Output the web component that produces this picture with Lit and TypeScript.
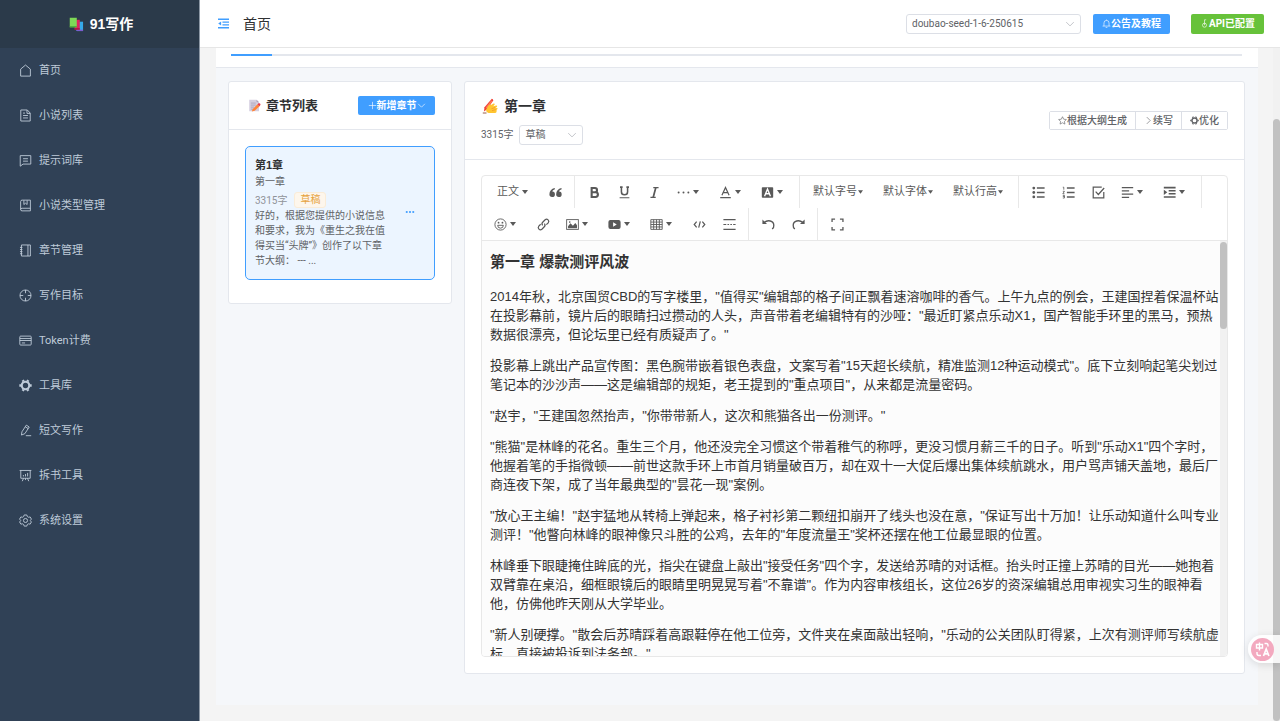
import { LitElement, html, svg, css, type TemplateResult } from "lit";
import { customElement, property } from "lit/decorators.js";

/* Line icons share a 16-unit grid and inherit the text colour. */
const ICONS: Record<string, TemplateResult> = {
  house: svg`<path d="M2 6.3 8 1.3l6 5V14.9H2z"/>`,
  document: svg`<path d="M2.2 1.2h8L13.8 5v9.8H2.2z M9.8 1.4v4h4 M5 8h6 M5 11h6 M5 5h2.4"/>`,
  chat: svg`<path d="M1.5 2h13v10.4H5L1.5 15z M5 5.8h6 M5 8.8h6"/>`,
  collection: svg`<path d="M2 3.2Q2 1.4 3.8 1.4H14v13.2H3.8Q2 14.6 2 13z M2 13Q2 11.4 3.8 11.4H14 M6 1.6v5.2l2-1.6 2 1.6V1.6"/>`,
  notebook: svg`<path d="M3 1.2h11v13.6H3z M11 1.2v13.6 M1.2 4.2h3 M1.2 6.8h3 M1.2 9.4h3 M1.2 12h3"/>`,
  aim: svg`<circle cx="8" cy="8" r="6.8"/><path d="M8 1.2v4 M8 10.8v4 M1.2 8h4 M10.8 8h4"/>`,
  card: svg`<rect x="1" y="2.6" width="14" height="11" rx="1"/><path d="M1 5.6h14 M1 8h14 M3.5 11h4"/>`,
  tools: svg`<circle cx="8" cy="8" r="4.6" stroke-width="2.6"/><path stroke-width="3" d="M4.600 1.400 5.500 3 M11.400 1.400 10.500 3 M15.600 8h-2.200 M.4 8h2.200 M4.600 14.600 5.500 13 M11.400 14.600 10.500 13"/>`,
  edit: svg`<path d="M3 13.6l.6-4L9 1.4l3.6 2.3-5.4 8.2z M7.7 3.4l3.6 2.3 M8.4 14.4h6.6"/>`,
  board: svg`<path d="M.8 1.8h14.4 M2.2 1.8v9.6h11.6V1.8 M5.6 11.4 4 15 M10.4 11.4 12 15 M8 11.4v2.2 M5.4 7.4v1.8 M8 6.2v3 M10.6 4.8v4.4"/>`,
  setting: svg`<path d="M6.4 1.2h3.2l.6 1.9 1.5.9 2-.4 1.6 2.7L14 7.8v.6l1.3 1.4-1.6 2.7-2-.4-1.5.9-.6 1.9H6.4L5.8 13l-1.5-.9-2 .4L.7 9.8 2 8.4v-.6L.7 6.3l1.6-2.7 2 .4 1.5-.9z"/><circle cx="8" cy="8" r="2.5"/>`,
  fold: svg`<path stroke-width="2" d="M0 1.800h16 M6.500 6h9.500 M6.500 10h9.500 M0 14.200h16"/><path d="M4.500 5v6L.3 8z" fill="currentColor" stroke="none"/>`,
  bell: svg`<path d="M3.500 12.500V7a4.500 4.500 0 0 1 9 0v5.500 M1 12.600h14 M8 1v1.600 M6.500 15h3"/>`,
  key: svg`<circle cx="8" cy="11" r="3.6"/><path d="M8 11V1.4h3"/>`,
  plus: svg`<path d="M8 1.5v13 M1.5 8h13"/>`,
  down: svg`<path d="M2 5l6 6 6-6"/>`,
  right: svg`<path d="M5 2l6 6-6 6"/>`,
  star: svg`<path d="M8 1.3l2.1 4.4 4.8.6-3.5 3.3.9 4.8L8 12l-4.3 2.4.9-4.8L1.1 6.3l4.800-.6z"/>`,
  more: svg`<g fill="currentColor" stroke="none"><circle cx="2.8" cy="8" r="1.7"/><circle cx="8" cy="8" r="1.7"/><circle cx="13.2" cy="8" r="1.7"/></g>`,
  dots: svg`<g fill="currentColor" stroke="none"><circle cx="2" cy="8" r="1.200"/><circle cx="8" cy="8" r="1.200"/><circle cx="14" cy="8" r="1.200"/></g>`,
  quote: svg`<path fill="currentColor" stroke="none" d="M7 2.500C3 3.500.5 6 .5 10.200a3.400 3.400 0 1 0 3.600-3.400C4.300 5.500 5.300 4.500 7.300 3.900z M15.300 2.500C11.300 3.500 8.800 6 8.800 10.200a3.400 3.400 0 1 0 3.600-3.400C12.600 5.500 13.600 4.500 15.600 3.900z"/>`,
  bold: svg`<path stroke-width="2.6" d="M4.500 2.500h4a2.600 2.600 0 0 1 0 5.200h-4z M4.500 7.700h4.800a2.900 2.900 0 0 1 0 5.800H4.500z"/>`,
  underline: svg`<path stroke-width="1.900" d="M4.200 1.400v5.600a3.800 3.800 0 0 0 7.600 0V1.400 M2.500 1.400h3.200 M10.300 1.400h3.200"/><path stroke-width="1.400" d="M2 14.400h12"/>`,
  italic: svg`<path stroke-width="2.200" d="M9.600 2 6.400 14"/><path stroke-width="1.500" d="M6.500 2h6.500 M3 14h6.500"/>`,
  color: svg`<path stroke-width="1.500" d="M3.600 11.500 8 1.800l4.400 9.700 M5.200 8.200h5.600"/><path stroke-width="1.800" d="M1.500 14.300h13"/>`,
  fill: svg`<rect x="1" y="1.500" width="14" height="13" rx="1" fill="currentColor" stroke="none"/><path stroke="#fff" stroke-width="1.700" d="M4.400 12.500 8 3.800l3.600 8.700 M5.800 9.500h4.400"/>`,
  ul: svg`<g fill="currentColor" stroke="none"><circle cx="2.200" cy="2.500" r="1.700"/><circle cx="2.200" cy="8" r="1.700"/><circle cx="2.200" cy="13.500" r="1.700"/></g><path stroke-width="1.700" d="M6 2.500h9.500 M6 8h9.500 M6 13.500h9.500"/>`,
  ol: svg`<path stroke-width="1" d="M1 1.500h1.200v3 M1 6.500h2L1 9.500h2 M1 11.500h2v3.300H1 M1 13h2"/><path stroke-width="1.700" d="M6 2.500h9.500 M6 8h9.500 M6 13.500h9.500"/>`,
  todo: svg`<path stroke-width="1.500" d="M14.500 7.500v7h-13v-13H12 M4.500 7l3.300 3.500L15 2.500"/>`,
  align: svg`<path stroke-width="1.600" d="M1 2h14 M1 6h9 M1 10h14 M1 14h9"/>`,
  indent: svg`<path stroke-width="1.900" d="M1 2h14.500 M7 5.800h8.500 M7 9.600h8.500 M1 13.600h14.500"/><path fill="currentColor" stroke="none" d="M1 4.500v6.500L5.300 7.800z"/>`,
  emoji: svg`<circle cx="8" cy="8" r="6.900"/><path d="M4.500 9a3.500 3.500 0 0 0 7 0z"/><g fill="currentColor" stroke="none"><circle cx="5.600" cy="5.700" r="1.100"/><circle cx="10.400" cy="5.700" r="1.100"/></g>`,
  link: svg`<path stroke-width="1.500" d="M7 9a2.700 2.700 0 0 1 0-3.800l3-3a2.700 2.700 0 0 1 3.800 3.800L11.500 8.200 M9 7a2.700 2.700 0 0 1 0 3.800l-3 3A2.700 2.700 0 0 1 2.200 10l2.300-2.300"/>`,
  image: svg`<rect x=".8" y="2" width="14.400" height="12"/><path fill="currentColor" stroke="none" d="M2.500 12.500V10l3-3.500 3 3L11.500 6l2 3v3.500z"/><circle cx="4.600" cy="5" r="1" fill="currentColor" stroke="none"/>`,
  video: svg`<rect x=".5" y="2.500" width="15" height="11" rx="2.500" fill="currentColor" stroke="none"/><path fill="#fff" stroke="none" d="M6.300 5.300v5.400L10.800 8z"/>`,
  table: svg`<path d="M1 2h14v12H1z M1 5h14 M1 8h14 M1 11h14 M4.500 2v12 M8 2v12 M11.500 2v12"/>`,
  code: svg`<path stroke-width="1.500" d="M4.500 4.500 1.500 8l3 3.500 M11.500 4.500l3 3.500-3 3.500 M9 4.200 7 11.800"/>`,
  divider: svg`<path stroke-width="1.400" d="M.5 2h15 M.5 14h15 M.5 8h3.500 M5.500 8h2 M9 8h2 M12.500 8h3"/>`,
  undo: svg`<path stroke-width="1.700" d="M2.500 5.500C7 2 14.500 3 14.500 9a5 5 0 0 1-2 4.500"/><path fill="currentColor" stroke="none" d="M.5 1.800v5.700h5.700z"/>`,
  redo: svg`<path stroke-width="1.700" d="M13.500 5.500C9 2 1.500 3 1.500 9a5 5 0 0 0 2 4.500"/><path fill="currentColor" stroke="none" d="M15.500 1.800v5.700H9.800z"/>`,
  full: svg`<path stroke-width="1.600" d="M1.300 5V1.300h3.700 M11 1.300h3.700V5 M14.700 11v3.700H11 M5 14.700H1.300V11"/>`,
};

const PICTURES: Record<string, TemplateResult> = {
  books: svg`<path fill="#36a9e8" d="M8 5h7v10H8z"/><path fill="#7c5ccf" d="M8 13.500h7V15H8z"/><path fill="#e0245e" d="M6 3h5.500v10.500H6z"/><path fill="#a51545" d="M6 12h5.500v1.500H6z"/><path fill="#7ed957" d="M.8.800h7.500V11H.8z"/><path fill="#46a53a" d="M.8 9.800h7.500V11H.8z"/>`,
  memo: svg`<path fill="#d5cfe0" d="M1.500 1h9l3 3v11h-12z"/><path fill="#aaa1bb" d="M10.500 1v3h3z"/><path stroke="#a79fb8" d="M3.500 5h6 M3.500 7.500h6 M3.500 10h4 M3.500 12.500h3"/><path fill="#ff8438" d="m5.700 12.500 6-6 2.500 2.500-6 5.500-3.500.800z"/><path fill="#e8384f" d="m11.700 6.500 1.300-1.200q1-.5 1.800.3t.5 1.700L14 9z"/>`,
  writing: svg`<path fill="#f04438" d="M9.800.800q1.500.2 1.400 1.600L5.500 11l-3.600 2.500.6-4.200z"/><path fill="#ff7a59" d="M9.300 2.500 10.400 3.300 5 10.400 3.800 9.600z"/><path fill="#ffc531" d="M4 11.700 6.500 7.500Q8 6 9 7l2.500-1.500q1.500-.3 1.200 1l-1.500 1.800 3-.8q1.500 0 .8 1.300l-1.500 1 1.800.2q.8 1-.6 1.700L14.500 14q-.3 1-1.500 1H6.500Q4 14.500 4 11.700z"/><path stroke="#ef9224" stroke-width=".7" d="m9.500 10.700 3.500-1.200 M10 12.700l3.700-1.200"/><path stroke="#8c4b2f" stroke-width=".9" d="M.8 15h3.700"/>`,
};

const shared = css`
  :host { box-sizing: border-box; }
  *, *::before, *::after { box-sizing: border-box; }
  button, select { font-family: inherit; margin: 0; }
  button { cursor: pointer; white-space: nowrap; }
  a { color: inherit; text-decoration: none; }
`;

@customElement("ui-icon")
export class UiIcon extends LitElement {
  static styles = css`
    :host { display: inline-flex; flex: none; width: 13px; height: 13px; }
    .glyph { width: 100%; height: 100%; fill: none; stroke: currentColor; stroke-width: 1.1; overflow: visible; }
    .picture { width: 100%; height: 100%; fill: none; stroke-width: 1; }
  `;
  @property() name = "";
  render() {
    const picture = PICTURES[this.name];
    return html`<svg class=${picture ? "picture" : "glyph"} viewBox="0 0 16 16" aria-hidden="true">${picture ?? ICONS[this.name]}</svg>`;
  }
}

const MENU: [string, string][] = [
  ["house", "首页"],
  ["document", "小说列表"],
  ["chat", "提示词库"],
  ["collection", "小说类型管理"],
  ["notebook", "章节管理"],
  ["aim", "写作目标"],
  ["card", "Token计费"],
  ["tools", "工具库"],
  ["edit", "短文写作"],
  ["board", "拆书工具"],
  ["setting", "系统设置"],
];

@customElement("side-menu")
export class SideMenu extends LitElement {
  static styles = [shared, css`
    :host { display: block; background: #304156; color: #bfcbd9; border-right: 1px solid #8d98a5; }
    .brand { display: flex; align-items: center; justify-content: center; gap: 6px; height: 48px; padding-left: 3px; background: #2b3a4a; color: #fff; font: 700 14px/20px "Liberation Sans", "Noto Sans CJK SC", sans-serif; margin: 0; }
    .brand ui-icon { width: 15px; height: 15px; }
    .link { display: flex; align-items: center; gap: 7px; height: 45px; padding-left: 19px; font-size: 11px; line-height: 16px; }
  `];
  render() {
    return html`
      <h1 class="brand"><ui-icon name="books"></ui-icon>91写作</h1>
      <nav>${MENU.map(([icon, label]) => html`<a class="link" href="#"><ui-icon name=${icon}></ui-icon>${label}</a>`)}</nav>
    `;
  }
}

@customElement("top-bar")
export class TopBar extends LitElement {
  static styles = [shared, css`
    :host { display: flex; align-items: center; height: 48px; padding: 0 16px 0 18px; background: #fff; border-bottom: 1px solid #e6e6e6; }
    .fold { display: flex; padding: 0; border: 0; background: none; color: #409eff; }
    .fold ui-icon { width: 11px; height: 11px; }
    .crumb { margin-left: 14px; font-size: 14px; line-height: 20px; color: #303133; flex: 1; }
    .pick { display: grid; align-items: center; width: 175px; }
    .pick select, .pick ui-icon { grid-area: 1 / 1; }
    .pick select { appearance: none; width: 100%; height: 20px; padding: 0 24px 0 5px; border: 1px solid #dcdfe6; border-radius: 3px; background: #fff; color: #606266; font-size: 10px; line-height: 16px; }
    .pick ui-icon { justify-self: end; width: 10px; height: 10px; margin-right: 6px; color: #a8abb2; pointer-events: none; }
    .action { display: flex; align-items: center; justify-content: center; height: 20px; border: 0; border-radius: 2px; padding: 0; color: #fff; font-size: 10px; font-weight: 700; line-height: 16px; }
    .action ui-icon { width: 9px; height: 9px; }
    .notice { width: 77px; margin-left: 12px; background: #409eff; }
    .config { width: 73px; margin-left: 21px; background: #67c23a; }
  `];
  render() {
    return html`
      <button class="fold" aria-label="折叠菜单"><ui-icon name="fold"></ui-icon></button>
      <span class="crumb">首页</span>
      <label class="pick">
        <select aria-label="模型"><option>doubao-seed-1-6-250615</option></select>
        <ui-icon name="down"></ui-icon>
      </label>
      <button class="action notice"><ui-icon name="bell"></ui-icon>公告及教程</button>
      <button class="action config"><ui-icon name="key"></ui-icon>API已配置</button>
    `;
  }
}

@customElement("chapter-list")
export class ChapterList extends LitElement {
  static styles = [shared, css`
    :host { display: block; background: #fff; border: 1px solid #e4e7ed; border-radius: 3px; }
    .head { display: flex; align-items: center; gap: 5px; height: 48px; padding: 0 16px 0 19px; border-bottom: 1px solid #e4e7ed; }
    .title { flex: 1; margin: 0; font-size: 13px; line-height: 18px; color: #303133; }
    .add { display: flex; align-items: center; justify-content: center; width: 77px; height: 19px; padding: 0; border: 0; border-radius: 2px; background: #409eff; color: #fff; font-size: 10px; font-weight: 700; line-height: 16px; }
    .add ui-icon { width: 9px; height: 9px; }
    .body { padding: 16px 16px 23px; }
    .item { display: flex; align-items: center; justify-content: space-between; padding: 9px 19px 11px 9px; border: 1px solid #409eff; border-radius: 5px; background: #ecf5ff; }
    .text { width: 137px; font-size: 10px; color: #606266; }
    .no { margin: 0; font: 700 11px/18px "Liberation Sans", "Noto Sans CJK SC", sans-serif; color: #303133; }
    .name { margin: 0; line-height: 16px; }
    .meta { display: flex; align-items: center; gap: 7px; margin-top: 2px; color: #909399; line-height: 15px; }
    .tag { padding: 0 5px; border: 1px solid #faecd8; border-radius: 3px; background: #fdf6ec; color: #e6a23c; line-height: 14px; }
    .brief { margin: 0; line-height: 15px; font-variant-ligatures: none; }
    .menu { display: flex; padding: 0; border: 0; background: none; color: #409eff; }
    .menu ui-icon { width: 10px; height: 10px; }
  `];
  render() {
    return html`
      <header class="head">
        <ui-icon name="memo"></ui-icon>
        <h2 class="title">章节列表</h2>
        <button class="add"><ui-icon name="plus"></ui-icon>新增章节<ui-icon name="down"></ui-icon></button>
      </header>
      <div class="body">
        <article class="item">
          <div class="text">
            <h3 class="no">第1章</h3>
            <p class="name">第一章</p>
            <div class="meta"><span>3315字</span><span class="tag">草稿</span></div>
            <p class="brief">好的，根据您提供的小说信息和要求，我为《重生之我在值得买当“头牌”》创作了以下章节大纲： --- ...</p>
          </div>
          <button class="menu" aria-label="更多"><ui-icon name="more"></ui-icon></button>
        </article>
      </div>
    `;
  }
}

interface Tool { icon?: string; label?: string; caret?: boolean; size?: string; }

const i = (icon: string): Tool => ({ icon });
const c = (icon: string): Tool => ({ icon, caret: true });

const TOOLBAR: Tool[][][] = [
  [
    [{ label: "正文", caret: true, size: "short" }, i("quote")],
    [i("bold"), i("underline"), i("italic"), c("dots"), c("color"), c("fill")],
    [{ label: "默认字号", caret: true, size: "long" }, { label: "默认字体", caret: true, size: "long" }, { label: "默认行高", caret: true, size: "long" }],
    [i("ul"), i("ol"), i("todo"), c("align"), c("indent")],
  ],
  [
    [c("emoji"), i("link"), c("image"), c("video"), c("table"), i("code"), i("divider")],
    [i("undo"), i("redo")],
    [i("full")],
  ],
];

const PARAGRAPHS = [
  `2014年秋，北京国贸CBD的写字楼里，"值得买"编辑部的格子间正飘着速溶咖啡的香气。上午九点的例会，王建国捏着保温杯站在投影幕前，镜片后的眼睛扫过攒动的人头，声音带着老编辑特有的沙哑："最近盯紧点乐动X1，国产智能手环里的黑马，预热数据很漂亮，但论坛里已经有质疑声了。"`,
  `投影幕上跳出产品宣传图：黑色腕带嵌着银色表盘，文案写着"15天超长续航，精准监测12种运动模式"。底下立刻响起笔尖划过笔记本的沙沙声——这是编辑部的规矩，老王提到的"重点项目"，从来都是流量密码。`,
  `"赵宇，"王建国忽然抬声，"你带带新人，这次和熊猫各出一份测评。"`,
  `"熊猫"是林峰的花名。重生三个月，他还没完全习惯这个带着稚气的称呼，更没习惯月薪三千的日子。听到"乐动X1"四个字时，他握着笔的手指微顿——前世这款手环上市首月销量破百万，却在双十一大促后爆出集体续航跳水，用户骂声铺天盖地，最后厂商连夜下架，成了当年最典型的"昙花一现"案例。`,
  `"放心王主编！"赵宇猛地从转椅上弹起来，格子衬衫第二颗纽扣崩开了线头也没在意，"保证写出十万加！让乐动知道什么叫专业测评！"他瞥向林峰的眼神像只斗胜的公鸡，去年的"年度流量王"奖杯还摆在他工位最显眼的位置。`,
  `林峰垂下眼睫掩住眸底的光，指尖在键盘上敲出"接受任务"四个字，发送给苏晴的对话框。抬头时正撞上苏晴的目光——她抱着双臂靠在桌沿，细框眼镜后的眼睛里明晃晃写着"不靠谱"。作为内容审核组长，这位26岁的资深编辑总用审视实习生的眼神看他，仿佛他昨天刚从大学毕业。`,
  `"新人别硬撑。"散会后苏晴踩着高跟鞋停在他工位旁，文件夹在桌面敲出轻响，"乐动的公关团队盯得紧，上次有测评师写续航虚标，直接被投诉到法务部。"`,
];

@customElement("chapter-editor")
export class ChapterEditor extends LitElement {
  static styles = [shared, css`
    :host { display: flex; flex-direction: column; min-width: 0; min-height: 0; background: #fff; border: 1px solid #e4e7ed; border-radius: 3px; }
    .head { display: flex; align-items: center; justify-content: space-between; height: 78px; padding: 0 16px; border-bottom: 1px solid #e4e7ed; }
    .title { display: flex; align-items: center; gap: 5px; margin: 0; font-size: 14px; line-height: 20px; color: #303133; }
    .title ui-icon { width: 18px; height: 16px; }
    .meta { display: flex; align-items: center; gap: 6px; margin-top: 9px; font-size: 10px; line-height: 16px; color: #606266; }
    .state { display: grid; align-items: center; width: 64px; }
    .state select, .state ui-icon { grid-area: 1 / 1; }
    .state select { appearance: none; width: 100%; height: 20px; padding: 0 20px 0 5px; border: 1px solid #dcdfe6; border-radius: 3px; background: #fff; color: #606266; font-size: 10px; line-height: 16px; }
    .state ui-icon { justify-self: end; width: 10px; height: 10px; margin-right: 6px; color: #a8abb2; pointer-events: none; }
    .actions { display: flex; border: 1px solid #dcdfe6; border-radius: 2px; }
    .actions button { display: flex; align-items: center; height: 17px; padding: 0 8px; border: 0; background: #fff; color: #606266; font-size: 10px; font-weight: 500; line-height: 16px; }
    .actions button + button { border-left: 1px solid #dcdfe6; }
    .actions ui-icon { width: 9px; height: 9px; }
    .editor { display: flex; flex-direction: column; flex: 1; min-height: 0; margin: 15px 16px 16px; border: 1px solid #e8e8e8; border-radius: 4px; overflow: hidden; }
    .toolbar { border-bottom: 1px solid #e8e8e8; color: #595959; }
    .row { display: flex; height: 32px; }
    .group { display: flex; padding: 0 4px; border-right: 1px solid #e8e8e8; }
    .row + .row .group:last-child { border-right: 0; }
    .tool { display: flex; align-items: center; justify-content: center; gap: 3px; width: 30px; height: 32px; padding: 0; border: 0; background: none; color: inherit; font-size: 11px; line-height: 16px; }
    .tool.menu { justify-content: flex-start; width: 42px; padding-left: 8px; }
    .tool.short { width: 54px; padding-left: 11px; }
    .tool.long { width: 70px; gap: 1px; padding-left: 9px; }
    .caret { width: 6px; height: 4px; fill: currentColor; }
    .long .caret { width: 5px; }
    .pane { display: flex; flex: 1; min-height: 0; background: #fcfcfc; }
    .page { flex: 1; min-width: 0; overflow: hidden; padding: 11px 0 0 8px; outline: 0; color: #333; font-family: "Liberation Sans", "Noto Sans CJK SC", sans-serif; font-size: 13px; line-height: 19px; }
    .page h3 { margin: 0 0 16px; font-size: 15px; line-height: 19px; }
    .page p { margin: 0 0 12px; }
    .rail { width: 7px; padding: 1px 0; background: #f1f1f1; }
    .thumb { height: 21%; border-radius: 4px; background: #c1c1c1; }
  `];
  private tool(t: Tool) {
    return html`<button class="tool ${t.caret ? "menu" : ""} ${t.size ?? ""}" aria-label=${t.label ?? t.icon ?? ""}>
      ${t.icon ? html`<ui-icon name=${t.icon}></ui-icon>` : t.label}${t.caret ? html`<svg class="caret" viewBox="0 0 6 4" aria-hidden="true"><path d="M0 0h6L3 4z"/></svg>` : ""}
    </button>`;
  }
  render() {
    return html`
      <header class="head">
        <div>
          <h2 class="title"><ui-icon name="writing"></ui-icon>第一章</h2>
          <div class="meta">
            <span>3315字</span>
            <label class="state">
              <select aria-label="状态"><option>草稿</option></select>
              <ui-icon name="down"></ui-icon>
            </label>
          </div>
        </div>
        <div class="actions">
          <button><ui-icon name="star"></ui-icon>根据大纲生成</button>
          <button><ui-icon name="right"></ui-icon>续写</button>
          <button><ui-icon name="tools"></ui-icon>优化</button>
        </div>
      </header>
      <section class="editor">
        <div class="toolbar">
          ${TOOLBAR.map((row) => html`<div class="row">${row.map((group) => html`<div class="group">${group.map((t) => this.tool(t))}</div>`)}</div>`)}
        </div>
        <div class="pane">
          <div class="page" contenteditable="true" role="textbox" aria-label="正文">
            <h3>第一章 爆款测评风波</h3>
            ${PARAGRAPHS.map((p) => html`<p>${p}</p>`)}
          </div>
          <div class="rail"><div class="thumb"></div></div>
        </div>
      </section>
    `;
  }
}

@customElement("app-root")
export class AppRoot extends LitElement {
  static styles = [shared, css`
    :host { display: grid; grid-template-columns: 200px minmax(0, 1fr); height: 100vh; overflow: hidden; position: relative; background: #f4f4f4; font-family: Roboto, "Noto Sans CJK SC", sans-serif; }
    .main { display: flex; flex-direction: column; min-height: 0; }
    .view { display: flex; flex: 1; min-height: 0; padding-left: 16px; }
    .content { display: flex; flex-direction: column; flex: 1; min-width: 0; margin-bottom: 16px; background: #f5f7fa; }
    .tabs { height: 20px; padding: 6px 16px 0 15px; background: #fff; border-bottom: 1px solid #e4e7ed; }
    .track { height: 2px; background: #e4e7ed; }
    .active { width: 41px; height: 2px; background: #409eff; }
    .work { display: grid; grid-template-columns: 224px minmax(0, 1fr); gap: 12px; flex: 1; min-height: 0; padding: 13px 13px 31px 12px; }
    chapter-list { align-self: start; }
    .rail { width: 7px; margin-left: 15px; padding-top: 71px; background: #f1f1f1; }
    .thumb { height: 100%; border-radius: 4px; background: #c1c1c1; }
    .translate { position: absolute; right: 0; bottom: 58px; display: flex; align-items: center; width: 32px; height: 28px; padding: 0 0 0 3px; border: 0; border-radius: 14px 0 0 14px; background: rgba(255, 255, 255, 0.85); box-shadow: 0 2px 8px rgba(0, 0, 0, 0.12); }
    .badge { width: 23px; height: 23px; }
  `];
  render() {
    return html`
      <side-menu></side-menu>
      <div class="main">
        <top-bar></top-bar>
        <div class="view">
          <main class="content">
            <div class="tabs"><div class="track"><div class="active"></div></div></div>
            <div class="work">
              <chapter-list></chapter-list>
              <chapter-editor></chapter-editor>
            </div>
          </main>
          <div class="rail"><div class="thumb"></div></div>
        </div>
      </div>
      <button class="translate" aria-label="翻译">
        <svg class="badge" viewBox="0 0 23 23" fill="none" stroke="#fff" stroke-width="1.4" aria-hidden="true">
          <circle cx="11.500" cy="11.500" r="11.500" fill="#f3a9bf" stroke="none"/>
          <path d="M5.500 6.500h6v3.500h-6z M8.500 4.500v8 M13.500 5.500h2q1.500 0 1.500 2v1 M6 14v1.500q0 2 2 2h2"/>
          <path stroke-width="1.700" d="M12.500 18l2.700-7 2.700 7 M13.500 15.800h3.500"/>
        </svg>
      </button>
    `;
  }
}
